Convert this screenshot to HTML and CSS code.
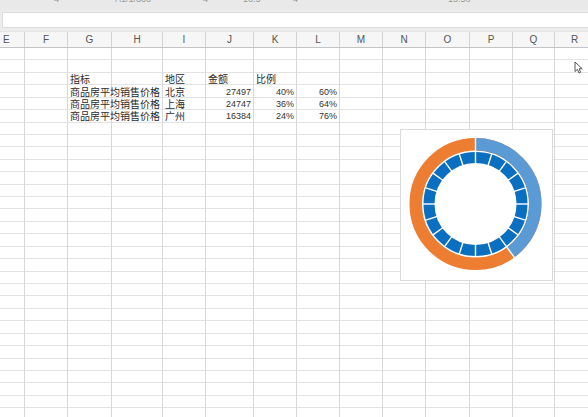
FILE: index.html
```html
<!DOCTYPE html>
<html>
<head>
<meta charset="utf-8">
<link rel="stylesheet" href="styles.css">
</head>
<body>
<div class="app">
  <div class="topbar">
    <span class="tb t1">4</span>
    <span class="tb t2">A1/1/336</span>
    <span class="tb t3">4</span>
    <span class="tb t4">16:5</span>
    <span class="tb t5">4</span>
    <span class="tb t6">15:58</span>
  </div>
  <div class="formula"><div class="fbox"></div></div>
  <div class="colhead">
    <div class="hc">E</div><div class="hc">F</div><div class="hc">G</div><div class="hc">H</div>
    <div class="hc">I</div><div class="hc">J</div><div class="hc">K</div><div class="hc">L</div>
    <div class="hc">M</div><div class="hc">N</div><div class="hc">O</div><div class="hc">P</div>
    <div class="hc">Q</div><div class="hc">R</div>
  </div>
  <div class="sheet">
    <div class="col c1"></div><div class="col c2"></div><div class="col c3"></div><div class="col c4"></div>
    <div class="col c5"></div><div class="col c6"></div><div class="col c7"></div><div class="col c8"></div>
    <div class="col c9"></div><div class="col c10"></div><div class="col c11"></div><div class="col c12"></div>
    <div class="col c13"></div><div class="col c14"></div>

    <div class="cell r3 c3 span2">指标</div>
    <div class="cell r3 c5">地区</div>
    <div class="cell r3 c6">金额</div>
    <div class="cell r3 c7">比例</div>

    <div class="cell r4 c3 span2">商品房平均销售价格</div>
    <div class="cell r4 c5">北京</div>
    <div class="cell r4 c6 num">27497</div>
    <div class="cell r4 c7 num">40%</div>
    <div class="cell r4 c8 num">60%</div>

    <div class="cell r5 c3 span2">商品房平均销售价格</div>
    <div class="cell r5 c5">上海</div>
    <div class="cell r5 c6 num">24747</div>
    <div class="cell r5 c7 num">36%</div>
    <div class="cell r5 c8 num">64%</div>

    <div class="cell r6 c3 span2">商品房平均销售价格</div>
    <div class="cell r6 c5">广州</div>
    <div class="cell r6 c6 num">16384</div>
    <div class="cell r6 c7 num">24%</div>
    <div class="cell r6 c8 num">76%</div>
  </div>

  <div class="chart">
    <svg width="151" height="150" viewBox="0 0 151 150">
      <g transform="translate(74.5 74) rotate(-90)">
        <circle r="59.75" fill="none" stroke="#ed7d31" stroke-width="12.5"/>
        <circle r="59.75" fill="none" stroke="#5b9bd5" stroke-width="12.5" stroke-dasharray="150.17 400"/>
        <circle r="46.5" fill="none" stroke="#0a6fc0" stroke-width="11"/>
        <g stroke="#ffffff" stroke-width="1.4">
          <line x1="53" y1="0" x2="67" y2="0"/>
          <line x1="53" y1="0" x2="67" y2="0" transform="rotate(144)"/>
          <line x1="40" y1="0" x2="53" y2="0" transform="rotate(0)"/>
          <line x1="40" y1="0" x2="53" y2="0" transform="rotate(18)"/>
          <line x1="40" y1="0" x2="53" y2="0" transform="rotate(36)"/>
          <line x1="40" y1="0" x2="53" y2="0" transform="rotate(54)"/>
          <line x1="40" y1="0" x2="53" y2="0" transform="rotate(72)"/>
          <line x1="40" y1="0" x2="53" y2="0" transform="rotate(90)"/>
          <line x1="40" y1="0" x2="53" y2="0" transform="rotate(108)"/>
          <line x1="40" y1="0" x2="53" y2="0" transform="rotate(126)"/>
          <line x1="40" y1="0" x2="53" y2="0" transform="rotate(144)"/>
          <line x1="40" y1="0" x2="53" y2="0" transform="rotate(162)"/>
          <line x1="40" y1="0" x2="53" y2="0" transform="rotate(180)"/>
          <line x1="40" y1="0" x2="53" y2="0" transform="rotate(198)"/>
          <line x1="40" y1="0" x2="53" y2="0" transform="rotate(216)"/>
          <line x1="40" y1="0" x2="53" y2="0" transform="rotate(234)"/>
          <line x1="40" y1="0" x2="53" y2="0" transform="rotate(252)"/>
          <line x1="40" y1="0" x2="53" y2="0" transform="rotate(270)"/>
          <line x1="40" y1="0" x2="53" y2="0" transform="rotate(288)"/>
          <line x1="40" y1="0" x2="53" y2="0" transform="rotate(306)"/>
          <line x1="40" y1="0" x2="53" y2="0" transform="rotate(324)"/>
          <line x1="40" y1="0" x2="53" y2="0" transform="rotate(342)"/>
        </g>
      </g>
    </svg>
  </div>

  <svg class="cursor" width="10" height="13" viewBox="0 0 10 13">
    <path d="M1 1 L1 10.5 L3.4 8.4 L5 12 L6.6 11.3 L5.1 7.8 L8.2 7.8 Z" fill="#ffffff" stroke="#444" stroke-width="0.9" stroke-linejoin="round"/>
  </svg>
</div>
</body>
</html>
```
FILE: styles.css
```css
* { box-sizing: border-box; }
html, body { margin: 0; padding: 0; }
body {
  width: 588px;
  height: 417px;
  overflow: hidden;
  background: #ffffff;
  font-family: "Liberation Sans", "Noto Sans CJK SC", sans-serif;
}
.app {
  position: relative;
  width: 588px;
  height: 417px;
  overflow: hidden;
}
.topbar {
  height: 10px;
  background: #e9e9e9;
  position: relative;
  overflow: hidden;
  display: flex;
}
.tb {
  position: absolute;
  top: -6px;
  font-size: 9px;
  line-height: 10px;
  color: #9a9a9a;
}
.t1 { left: 54px; }
.t2 { left: 115px; }
.t3 { left: 203px; }
.t4 { left: 243px; }
.t5 { left: 293px; }
.t6 { left: 448px; }
.formula {
  height: 21px;
  background: #ececec;
  padding: 2px 0 3px 2px;
}
.fbox {
  height: 16px;
  background: #ffffff;
  border: 1px solid #dcdcdc;
  border-right: none;
}
.colhead {
  height: 17px;
  display: grid;
  grid-template-columns: 25px 43px 44px 51px 43px 48px 43px 43px 43px 43px 44px 43px 42px 40px;
  background: #f6f6f6;
  border-bottom: 1px solid #c4c4c4;
  border-top: 1px solid #e4e4e4;
}
.hc {
  border-right: 1px solid #d2d2d2;
  font-size: 10px;
  line-height: 15px;
  color: #555555;
  text-align: center;
}
.hc:first-child { text-align: left; padding-left: 3px; }
.sheet {
  height: 372px;
  display: grid;
  grid-template-columns: 25px 43px 44px 51px 43px 48px 43px 43px 43px 43px 44px 43px 42px 40px;
  grid-template-rows: repeat(30, 12.42px);
  background: repeating-linear-gradient(to bottom, #ffffff 0, #ffffff 11.42px, #e3e3e3 11.42px, #e3e3e3 12.42px);
}
.col {
  grid-row: 1 / -1;
  border-right: 1px solid #d8d8d8;
}
.c1 { grid-column: 1; }
.c2 { grid-column: 2; }
.c3 { grid-column: 3; }
.c4 { grid-column: 4; }
.c5 { grid-column: 5; }
.c6 { grid-column: 6; }
.c7 { grid-column: 7; }
.c8 { grid-column: 8; }
.c9 { grid-column: 9; }
.c10 { grid-column: 10; }
.c11 { grid-column: 11; }
.c12 { grid-column: 12; }
.c13 { grid-column: 13; }
.c14 { grid-column: 14; }
.r3 { grid-row: 3; }
.r4 { grid-row: 4; }
.r5 { grid-row: 5; }
.r6 { grid-row: 6; }
.span2 { grid-column: 3 / span 2; }
.cell {
  font-family: "Noto Sans CJK SC", "Liberation Sans", sans-serif;
  font-size: 10px;
  line-height: 12px;
  color: #2a2a2a;
  padding-left: 2px;
  white-space: nowrap;
  align-self: end;
  margin-bottom: 0px;
}
.num {
  font-family: "Liberation Sans", sans-serif;
  font-size: 9px;
  text-align: right;
  padding-right: 3px;
  padding-left: 0;
  color: #333333;
}
.chart {
  position: absolute;
  left: 400px;
  top: 129px;
  width: 153px;
  height: 152px;
  background: #ffffff;
  border: 1px solid #dadada;
}
.chart svg { display: block; }
.cursor {
  position: absolute;
  left: 574px;
  top: 61px;
}
```
